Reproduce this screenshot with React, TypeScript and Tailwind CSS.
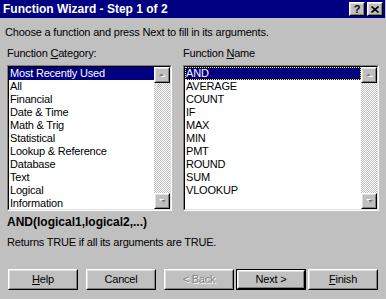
import type { ReactNode } from 'react';

const categories = [
  'Most Recently Used',
  'All',
  'Financial',
  'Date & Time',
  'Math & Trig',
  'Statistical',
  'Lookup & Reference',
  'Database',
  'Text',
  'Logical',
  'Information',
];

const functions = ['AND', 'AVERAGE', 'COUNT', 'IF', 'MAX', 'MIN', 'PMT', 'ROUND', 'SUM', 'VLOOKUP'];

function Arrow({ up }: { up: boolean }) {
  return (
    <div className="h-[16px] w-[16px] shrink-0 border border-t-white border-l-white border-r-black border-b-black">
      <div className="flex h-full w-full items-center justify-center border border-t-[#dfdfdf] border-l-[#dfdfdf] border-r-[#808080] border-b-[#808080] bg-[#c0c0c0]">
        <svg width="7" height="4" viewBox="0 0 7 4" className={up ? '' : 'rotate-180'}>
          <path d="M1 4h5L3.5 1.5z" fill="#fff" transform="translate(1 0)" />
          <path d="M0 3h5L2.5 0.5z" fill="#808080" />
        </svg>
      </div>
    </div>
  );
}

function ListBox({
  items,
  focused,
  width,
}: {
  items: string[];
  focused?: boolean;
  width: string;
}) {
  return (
    <div className={`${width} h-[146px] border border-t-[#808080] border-l-[#808080] border-r-white border-b-white`}>
      <div className="flex h-full border border-t-black border-l-black border-r-[#dfdfdf] border-b-[#dfdfdf] bg-white">
        <div className="min-w-0 flex-1">
          {items.map((item, i) => (
            <div
              key={item}
              className={
                i === 0
                  ? `h-[13px] bg-[#000080] pl-[1px] leading-[13px] whitespace-nowrap text-white ${
                      focused ? 'outline-1 outline-dotted -outline-offset-1 outline-[#ffff00]' : ''
                    }`
                  : 'h-[13px] pl-[1px] leading-[13px] whitespace-nowrap'
              }
            >
              {item}
            </div>
          ))}
        </div>
        <div className="flex w-[16px] flex-col bg-[repeating-conic-gradient(#c0c0c0_0_25%,#fff_0_50%)] bg-[length:2px_2px]">
          <Arrow up />
          <div className="flex-1" />
          <Arrow up={false} />
        </div>
      </div>
    </div>
  );
}

function Button({
  children,
  isDefault,
  disabled,
}: {
  children: ReactNode;
  isDefault?: boolean;
  disabled?: boolean;
}) {
  const body = (
    <div className="h-full border border-t-white border-l-white border-r-black border-b-black">
      <div className="flex h-full items-center justify-center border border-t-[#dfdfdf] border-l-[#dfdfdf] border-r-[#808080] border-b-[#808080] bg-[#c0c0c0]">
        <span className={disabled ? 'text-[#808080] [text-shadow:1px_1px_#fff]' : ''}>{children}</span>
      </div>
    </div>
  );
  return (
    <div className={`h-[21px] w-[70px] ${isDefault ? 'border border-black' : ''}`}>{body}</div>
  );
}

function TitleButton({ children }: { children: ReactNode }) {
  return (
    <div className="h-[14px] w-[16px] border border-t-white border-l-white border-r-black border-b-black">
      <div className="flex h-full items-center justify-center border border-t-[#dfdfdf] border-l-[#dfdfdf] border-r-[#808080] border-b-[#808080] bg-[#c0c0c0] text-[11px] leading-none font-bold tracking-normal">
        {children}
      </div>
    </div>
  );
}

export default function App() {
  return (
    <div className="flex h-[299px] w-[386px] flex-col bg-[#c0c0c0] font-['Liberation_Sans',Arial,sans-serif] text-[11px] tracking-[-0.2px] text-black">
      <div className="flex h-[18px] w-[385px] shrink-0 items-center bg-[#000080] pl-[3px] pr-[2px]">
        <span className="flex-1 text-[12px] font-bold tracking-normal text-white">Function Wizard - Step 1 of 2</span>
        <div className="flex gap-[2px]">
          <TitleButton>?</TitleButton>
          <TitleButton>
            <svg width="8" height="7" viewBox="0 0 8 7">
              <path d="M0.5 0.5L7.5 6.5M7.5 0.5L0.5 6.5" stroke="#000" strokeWidth="1.6" />
            </svg>
          </TitleButton>
        </div>
      </div>

      <p className="mt-[8px] pl-[5px] leading-[13px]">
        Choose a function and press Next to fill in its arguments.
      </p>

      <div className="mt-[8px] flex gap-[11px] pl-[7px]">
        <div>
          <div className="mb-[5px] leading-[13px]">
            Function <u>C</u>ategory:
          </div>
          <ListBox items={categories} width="w-[165px]" />
        </div>
        <div>
          <div className="mb-[5px] leading-[13px]">
            Function <u>N</u>ame
          </div>
          <ListBox items={functions} focused width="w-[196px]" />
        </div>
      </div>

      <div className="mt-[5px] pl-[7px] text-[12px] leading-[13px] font-bold tracking-normal">
        AND(logical1,logical2,...)
      </div>
      <div className="mt-[7px] pl-[7px] leading-[13px]">Returns TRUE if all its arguments are TRUE.</div>

      <div className="mt-[20px] flex pl-[8px]">
        <Button>
          <u>H</u>elp
        </Button>
        <div className="ml-[8px]">
          <Button>Cancel</Button>
        </div>
        <div className="ml-[8px] flex gap-[2px]">
          <Button disabled>&lt; Back</Button>
          <Button isDefault>Next &gt;</Button>
          <Button>
            <u>F</u>inish
          </Button>
        </div>
      </div>
    </div>
  );
}
